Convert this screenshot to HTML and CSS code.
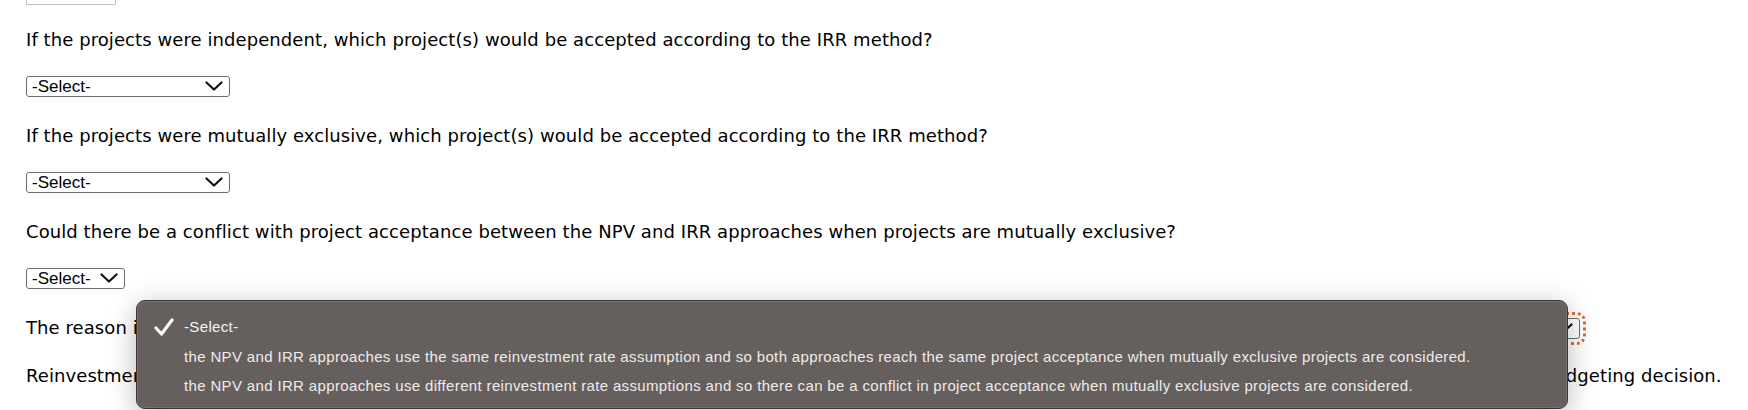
FILE: index.html
```html
<!DOCTYPE html>
<html lang="en">
<head>
<meta charset="utf-8">
<title>IRR questions</title>
<link rel="stylesheet" href="styles.css">
</head>
<body>
<div class="page">
  <div class="prev-box"></div>

  <div class="question">
    <p class="prompt">If the projects were independent, which project(s) would be accepted according to the IRR method?</p>
    <div class="answer">
      <span class="select select-md"><span class="select-text">-Select-</span><svg class="chev" viewBox="0 0 18 10" width="18" height="10"><polyline points="1.5,1.5 9,8.5 16.5,1.5"/></svg></span>
    </div>
  </div>

  <div class="question">
    <p class="prompt">If the projects were mutually exclusive, which project(s) would be accepted according to the IRR method?</p>
    <div class="answer">
      <span class="select select-md"><span class="select-text">-Select-</span><svg class="chev" viewBox="0 0 18 10" width="18" height="10"><polyline points="1.5,1.5 9,8.5 16.5,1.5"/></svg></span>
    </div>
  </div>

  <div class="question">
    <p class="prompt">Could there be a conflict with project acceptance between the NPV and IRR approaches when projects are mutually exclusive?</p>
    <div class="answer">
      <span class="select select-sm"><span class="select-text">-Select-</span><svg class="chev" viewBox="0 0 18 10" width="18" height="10"><polyline points="1.5,1.5 9,8.5 16.5,1.5"/></svg></span>
    </div>
  </div>

  <p class="line reason">The reason is <span class="select select-wide focused"><span class="select-text">-Select-</span><svg class="chev" viewBox="0 0 18 10" width="18" height="10"><polyline points="1.5,1.5 9,8.5 16.5,1.5"/></svg></span></p>

  <p class="line reinvest">Reinvestment at the <span class="select select-lg"><span class="select-text">-Select-</span><svg class="chev" viewBox="0 0 18 10" width="18" height="10"><polyline points="1.5,1.5 9,8.5 16.5,1.5"/></svg></span> is the better assumption, so when projects are mutually exclusive the NPV method should be used to make the capital budgeting decision.</p>

  <div class="menu">
    <div class="menu-item selected">
      <svg class="check" viewBox="0 0 20 18" width="20" height="18"><polyline points="2,10 7.5,16 18,2"/></svg>
      <span>-Select-</span>
    </div>
    <div class="menu-item"><span>the NPV and IRR approaches use the same reinvestment rate assumption and so both approaches reach the same project acceptance when mutually exclusive projects are considered.</span></div>
    <div class="menu-item"><span>the NPV and IRR approaches use different reinvestment rate assumptions and so there can be a conflict in project acceptance when mutually exclusive projects are considered.</span></div>
  </div>
</div>
</body>
</html>
```

FILE: styles.css
```css
html, body {
  margin: 0;
  padding: 0;
  background: #ffffff;
}

body {
  font-family: "DejaVu Sans", Verdana, sans-serif;
  font-size: 18px;
  letter-spacing: 0.08px;
  color: #000000;
  overflow: hidden;
  height: 410px;
}

.page {
  position: relative;
  padding: 0 26px;
  height: 410px;
}

.prev-box {
  width: 88px;
  height: 4px;
  border: 1px solid #c4c4c4;
  border-top: none;
  margin-bottom: 24px;
}

.question {
  height: 96px;
}

.prompt {
  margin: 0;
  line-height: 22px;
}

.answer {
  margin-top: 23px;
  height: 21px;
}

.select {
  display: inline-flex;
  align-items: center;
  justify-content: space-between;
  box-sizing: border-box;
  height: 21px;
  padding: 0 6px 0 5px;
  border: 1px solid #6e6e6e;
  border-radius: 3px;
  background: #ffffff;
  font-family: "Liberation Sans", Arial, sans-serif;
  font-size: 17px;
  letter-spacing: 0;
  line-height: 19px;
  vertical-align: middle;
}

.select-md { width: 204px; }
.select-sm { width: 99px; }
.select-wide { width: 1427px; }
.select-lg { width: 236px; }

.chev {
  flex: none;
  fill: none;
  stroke: #111111;
  stroke-width: 2.2;
  stroke-linecap: round;
  stroke-linejoin: round;
}

.focused {
  outline: 3px dotted #e26a2c;
  outline-offset: 3px;
}

.line {
  margin: 0;
  line-height: 22px;
}

.reason {
  display: flex;
  align-items: center;
  gap: 6px;
  white-space: nowrap;
}

.reinvest {
  margin-top: 26px;
  white-space: nowrap;
}

.menu {
  position: absolute;
  left: 136px;
  top: 300px;
  width: 1432px;
  height: 109px;
  box-sizing: border-box;
  padding: 11px 0 0 0;
  background: #655f5d;
  border: 1px solid #3b3735;
  border-radius: 9px;
  box-shadow: inset 0 0 0 1px rgba(255, 255, 255, 0.12), 0 6px 28px rgba(0, 0, 0, 0.28);
  font-family: "Liberation Sans", Arial, sans-serif;
  font-size: 15px;
  letter-spacing: 0.35px;
  color: #efecea;
}

.menu-item {
  display: flex;
  align-items: center;
  height: 29.5px;
  padding-left: 47px;
  position: relative;
  white-space: nowrap;
}

.menu-item.selected {
  color: #f6f4f3;
}

.check {
  position: absolute;
  left: 17px;
  top: 6px;
  fill: none;
  stroke: #ffffff;
  stroke-width: 3.2;
  stroke-linecap: round;
  stroke-linejoin: round;
}
```
